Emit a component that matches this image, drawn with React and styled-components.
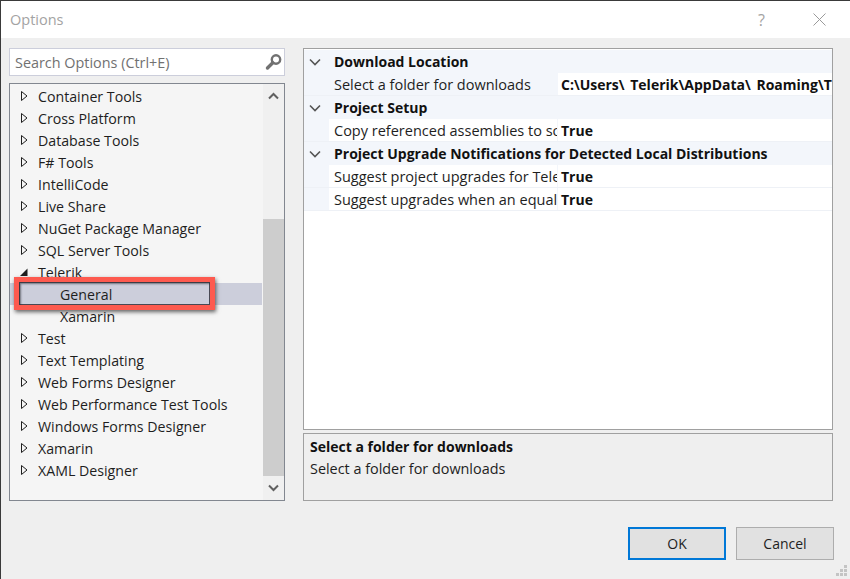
import React from "react";
import styled, {createGlobalStyle} from "styled-components";

const GlobalStyle = createGlobalStyle`
    html, body { margin: 0; padding: 0; background: #efefef; }
    body { font-family: "Open Sans", "Noto Sans", sans-serif; font-size: 14px; color: #1e1e1e; }
`;

const Dialog = styled.div`
    width: 850px;
    height: 579px;
    box-sizing: border-box;
    border-top: 1px solid #3a3a3a;
    border-left: 1px solid #3a3a3a;
    display: flex;
    flex-direction: column;
    position: relative;
    overflow: hidden;
    background: #efefef;
`;

const TitleBar = styled.div`
    height: 37px;
    flex: none;
    background: #fff;
    display: flex;
    align-items: center;
    padding: 0 24px 0 9px;
    gap: 48px;
`;

const Title = styled.div`
    flex: 1;
    color: #a3a3a3;
    font-size: 14.5px;
`;

const TitleGlyph = styled.span`
    color: #a3a3a3;
    font-size: 16px;
    line-height: 16px;
    display: flex;
`;

const Body = styled.div`
    flex: 1;
    display: flex;
    padding: 10px 16px 0 8px;
    gap: 18px;
    min-height: 0;
`;

const LeftColumn = styled.div`
    width: 276px;
    height: 453px;
    flex: none;
    display: flex;
    flex-direction: column;
    gap: 7px;
`;

const SearchBox = styled.div`
    height: 28px;
    flex: none;
    box-sizing: border-box;
    border: 1px solid #ccceDB;
    background: #fff;
    display: flex;
    align-items: center;
    justify-content: space-between;
    padding: 0 1px 0 5px;
    color: #717171;
    font-size: 14.4px;
`;

const Tree = styled.div`
    flex: 1;
    box-sizing: border-box;
    border: 1px solid #828790;
    background: #f5f5f5;
    display: flex;
    min-height: 0;
`;

const TreeRows = styled.div`
    flex: 1;
    padding-top: 1px;
`;

const TreeRow = styled.div`
    height: 22px;
    display: flex;
    align-items: center;
    padding-left: ${p => (p.$child ? "50px" : "9px")};
    background: ${p => (p.$selected ? "#cccedb" : "transparent")};
    font-size: 14.2px;
    color: #1e1e1e;
    white-space: nowrap;
`;

const Arrow = styled.svg`
    width: 10px;
    height: 12px;
    margin-right: 9px;
    flex: none;
`;

const Scrollbar = styled.div`
    width: 21px;
    flex: none;
    margin-left: 1px;
    background: #f0f0f0;
    display: flex;
    flex-direction: column;
`;

const ScrollButton = styled.div`
    height: 24px;
    flex: none;
    display: flex;
    align-items: center;
    justify-content: center;
`;

const ScrollTrack = styled.div`
    flex: 1;
    padding-top: 111px;
    display: flex;
`;

const ScrollThumb = styled.div`
    flex: 1;
    background: #cdcdcd;
`;

const RightColumn = styled.div`
    width: 530px;
    flex: none;
    height: 453px;
    display: flex;
    flex-direction: column;
    gap: 3px;
`;

const Grid = styled.div`
    flex: 1;
    box-sizing: border-box;
    border: 1px solid #a0a0a0;
    background: #fff;
    padding-top: 1px;
    overflow: hidden;
`;

const Section = styled.div`
    height: 23px;
    background: #f3f6fb;
    display: flex;
    align-items: center;
    font-weight: 700;
    font-size: 14px;
    color: #111;
    white-space: nowrap;
`;

const Chevron = styled.svg`
    width: 12px;
    height: 8px;
    margin: 0 13px 0 5px;
    flex: none;
`;

const PropRow = styled.div`
    height: 22px;
    margin-bottom: 1px;
    display: flex;
    background: #f3f6fb;
    box-shadow: 0 1px 0 #eef1f6;
`;

const PropName = styled.div`
    width: 228px;
    margin-left: 25px;
    padding-left: 5px;
    box-sizing: border-box;
    flex: none;
    background: ${p => (p.$active ? "#f3f6fb" : "#fff")};
    font-size: 14.5px;
    line-height: 24px;
    overflow: hidden;
    white-space: nowrap;
`;

const PropValue = styled.div`
    flex: 1;
    min-width: 0;
    margin-left: 1px;
    padding-left: 3px;
    background: #fff;
    font-size: 14px;
    font-weight: 700;
    word-spacing: 2px;
    line-height: 24px;
    color: #111;
    overflow: hidden;
    white-space: nowrap;
`;

const Description = styled.div`
    height: 68px;
    flex: none;
    box-sizing: border-box;
    border: 1px solid #a0a0a0;
    padding: 2px 6px;
    font-size: 14.4px;
    line-height: 22px;
`;

const DescriptionTitle = styled.div`
    font-weight: 700;
    font-size: 14px;
    color: #111;
`;

const Footer = styled.div`
    height: 52px;
    flex: none;
    display: flex;
    justify-content: flex-end;
    align-items: flex-start;
    gap: 10px;
    padding-right: 16px;
`;

const DialogButton = styled.button`
    width: 98px;
    height: 33px;
    box-sizing: border-box;
    background: #e1e1e1;
    border: ${p => (p.$primary ? "2px solid #0078d7" : "1px solid #adadad")};
    font: inherit;
    font-size: 14px;
    color: #1e1e1e;
    padding: 0;
`;

const Highlight = styled.div`
    position: absolute;
    left: 13px;
    top: 276px;
    width: 201px;
    height: 33px;
    box-sizing: border-box;
    border: 5px solid #fd5a4f;
    box-shadow: 1px 2px 4px rgba(0, 0, 0, 0.6), inset 0 0 0 1px rgba(40, 40, 50, 0.8), inset 2px 2px 2px rgba(40, 40, 50, 0.55);
`;

const Grip = styled.svg`
    position: absolute;
    right: 3px;
    bottom: 3px;
    width: 11px;
    height: 11px;
`;

const treeItems = [
    {label: "Container Tools"},
    {label: "Cross Platform"},
    {label: "Database Tools"},
    {label: "F# Tools"},
    {label: "IntelliCode"},
    {label: "Live Share"},
    {label: "NuGet Package Manager"},
    {label: "SQL Server Tools"},
    {label: "Telerik", open: true},
    {label: "General", child: true, selected: true},
    {label: "Xamarin", child: true},
    {label: "Test"},
    {label: "Text Templating"},
    {label: "Web Forms Designer"},
    {label: "Web Performance Test Tools"},
    {label: "Windows Forms Designer"},
    {label: "Xamarin"},
    {label: "XAML Designer"},
];

const sections = [
    {
        title: "Download Location",
        rows: [{name: "Select a folder for downloads", value: "C:\\Users\\ Telerik\\AppData\\ Roaming\\T", active: true}],
    },
    {
        title: "Project Setup",
        rows: [{name: "Copy referenced assemblies to so", value: "True"}],
    },
    {
        title: "Project Upgrade Notifications for Detected Local Distributions",
        rows: [
            {name: "Suggest project upgrades for Tele", value: "True"},
            {name: "Suggest upgrades when an equal", value: "True"},
        ],
    },
];

const TreeArrow = ({open}) => (
    <Arrow viewBox="0 0 10 12">
        {open
            ? <path d="M8.5 2.5V10H1z" fill="#1e1e1e"/>
            : <path d="M2.5 1.5L8 6l-5.5 4.5z" fill="none" stroke="#1e1e1e" strokeWidth="1"/>}
    </Arrow>
);

const ScrollChevron = ({up}) => (
    <svg width="11" height="8" viewBox="0 0 11 8">
        <path d={up ? "M1 6.5l4.5-4.5 4.5 4.5" : "M1 1.5l4.5 4.5 4.5-4.5"} fill="none" stroke="#606060" strokeWidth="2"/>
    </svg>
);

export default function App() {
    return (
        <>
            <GlobalStyle/>
            <Dialog>
                <TitleBar>
                    <Title>Options</Title>
                    <TitleGlyph>?</TitleGlyph>
                    <TitleGlyph>
                        <svg width="13" height="13" viewBox="0 0 13 13">
                            <path d="M0.5 0.5l12 12M12.5 0.5l-12 12" stroke="#9a9a9a" strokeWidth="1"/>
                        </svg>
                    </TitleGlyph>
                </TitleBar>
                <Body>
                    <LeftColumn>
                        <SearchBox>
                            Search Options (Ctrl+E)
                            <svg width="18" height="18" viewBox="0 0 18 18">
                                <circle cx="11" cy="6.5" r="4.2" fill="none" stroke="#717171" strokeWidth="2.4"/>
                                <path d="M7.8 9.8L2.5 15" stroke="#717171" strokeWidth="3.4" strokeLinecap="round"/>
                            </svg>
                        </SearchBox>
                        <Tree>
                            <TreeRows>
                                {treeItems.map((item, i) => (
                                    <TreeRow key={i} $child={item.child} $selected={item.selected}>
                                        {!item.child && <TreeArrow open={item.open}/>}
                                        {item.label}
                                    </TreeRow>
                                ))}
                            </TreeRows>
                            <Scrollbar>
                                <ScrollButton><ScrollChevron up/></ScrollButton>
                                <ScrollTrack><ScrollThumb/></ScrollTrack>
                                <ScrollButton><ScrollChevron/></ScrollButton>
                            </Scrollbar>
                        </Tree>
                    </LeftColumn>
                    <RightColumn>
                        <Grid>
                            {sections.map(section => (
                                <React.Fragment key={section.title}>
                                    <Section>
                                        <Chevron viewBox="0 0 12 8">
                                            <path d="M1 1.5l5 5 5-5" fill="none" stroke="#555" strokeWidth="1.6"/>
                                        </Chevron>
                                        {section.title}
                                    </Section>
                                    {section.rows.map(row => (
                                        <PropRow key={row.name}>
                                            <PropName $active={row.active}>{row.name}</PropName>
                                            <PropValue>{row.value}</PropValue>
                                        </PropRow>
                                    ))}
                                </React.Fragment>
                            ))}
                        </Grid>
                        <Description>
                            <DescriptionTitle>Select a folder for downloads</DescriptionTitle>
                            Select a folder for downloads
                        </Description>
                    </RightColumn>
                </Body>
                <Footer>
                    <DialogButton $primary>OK</DialogButton>
                    <DialogButton>Cancel</DialogButton>
                </Footer>
                <Highlight/>
                <Grip viewBox="0 0 11 11">
                    <path d="M8 0h3v3H8zM4 4h3v3H4zM8 4h3v3H8zM0 8h3v3H0zM4 8h3v3H4zM8 8h3v3H8z" fill="#c4c4c4"/>
                </Grip>
            </Dialog>
        </>
    );
}
